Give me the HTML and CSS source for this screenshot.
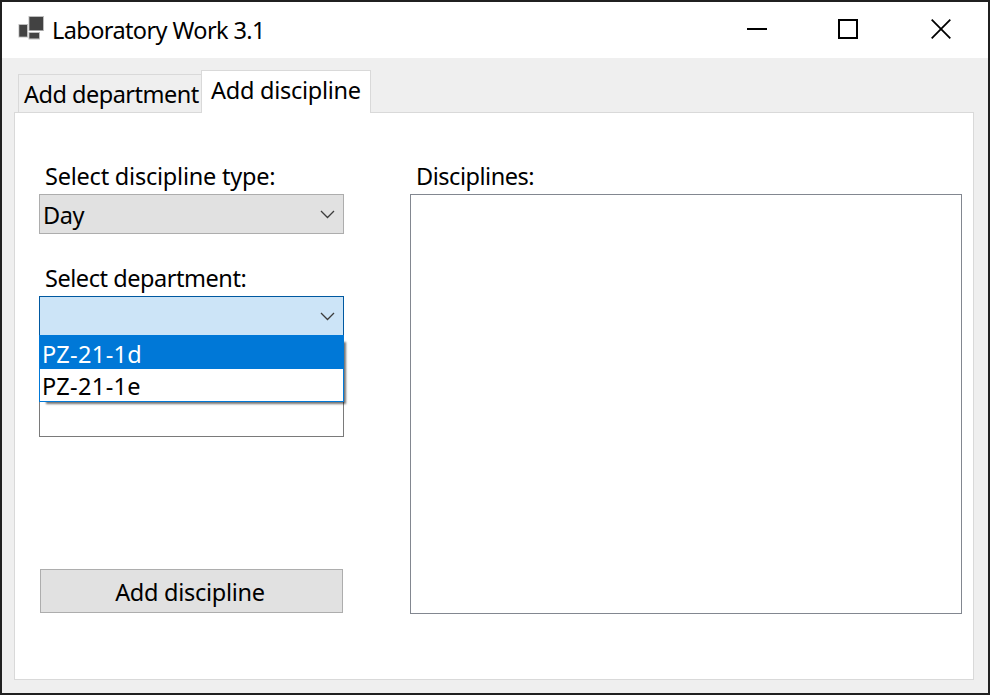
FILE: index.html
```html
<!DOCTYPE html>
<html lang="en">
<head>
<meta charset="utf-8">
<title>Laboratory Work 3.1</title>
<link rel="stylesheet" href="styles.css">
</head>
<body>
<div class="window">
  <header class="titlebar">
    <svg class="app-icon" width="28" height="26" viewBox="0 0 28 26">
      <g class="icon-halo"><rect x="0.5" y="9" width="9.5" height="13.5"/><rect x="10.5" y="1" width="15.5" height="15"/><rect x="10.5" y="17" width="11.5" height="7.5"/></g>
      <g class="icon-block"><rect x="1.3" y="10" width="7.7" height="11.6"/><rect x="11.4" y="2" width="13.6" height="13.2"/><rect x="11.4" y="18" width="9.6" height="5.4"/></g>
    </svg>
    <h1 class="title">Laboratory Work 3.1</h1>
    <div class="controls">
      <svg width="20" height="20" viewBox="0 0 20 20"><path d="M0 10H20"/></svg>
      <svg width="20" height="20" viewBox="0 0 20 20"><rect x="1" y="1" width="18" height="18"/></svg>
      <svg class="close" width="20" height="20" viewBox="0 0 20 20"><path class="cross" d="M.7 .7L19.3 19.3M19.3 .7L.7 19.3"/></svg>
    </div>
  </header>
  <main class="client">
    <nav class="tabs">
      <div class="tab"><span class="t-dep">Add department</span></div>
      <div class="tab active"><span class="t-dis">Add discipline</span></div>
    </nav>
    <section class="page">
      <form class="fields">
        <label class="label"><span class="t-type">Select discipline type:</span></label>
        <div class="combo"><span class="t-day">Day</span>
          <svg width="15" height="9" viewBox="0 0 15 9"><path d="M1 1L7.5 7.5L14 1"/></svg>
        </div>
        <label class="label second"><span class="t-sel">Select department:</span></label>
        <div class="combo open"><span></span>
          <svg width="15" height="9" viewBox="0 0 15 9"><path d="M1 1L7.5 7.5L14 1"/></svg>
          <div class="menu">
            <div class="item selected"><span class="t-pz">PZ-21-1d</span></div>
            <div class="item"><span class="t-pz">PZ-21-1e</span></div>
          </div>
        </div>
        <div class="textbox"></div>
        <div class="button"><span class="t-dis">Add discipline</span></div>
      </form>
      <div class="results">
        <label class="label"><span class="t-res">Disciplines:</span></label>
        <div class="listbox"></div>
      </div>
    </section>
  </main>
</div>
</body>
</html>
```
FILE: styles.css
```css
* { box-sizing: border-box; }
body { margin: 0; font: 23.5px/32px "Noto Sans", "Open Sans", sans-serif; color: #000; overflow: hidden; }
span, .title { white-space: nowrap; }
.window { width: 990px; height: 695px; border: 2px solid #202020; background: #efefef; display: flex; flex-direction: column; }
.titlebar { height: 56px; background: #fff; display: flex; align-items: flex-start; padding: 12px 37px 0 16px; }
.app-icon { flex: none; margin-top: 1px; }
.icon-halo { fill: #bdbdbd; }
.icon-block { fill: #424242; }
.title { margin: 0 0 0 6px; font-size: 23.5px; font-weight: 400; letter-spacing: -.6px; }
.controls { margin: 5px 0 0 auto; display: flex; gap: 71px; }
.controls svg { fill: none; stroke: #000; stroke-width: 2; }
.controls .close { margin-left: 2px; }
.controls .cross { stroke-width: 1.8; }
.client { flex: 1; padding: 12px 14px 13px 12px; display: flex; flex-direction: column; }
.tabs { display: flex; align-items: flex-end; padding-left: 4px; height: 42px; }
.tab { width: 183px; height: 38px; border: 1px solid #d9d9d9; border-width: 1px 0 0 1px; padding: 3px 0 0 5px; }
.tab.active { width: 170px; height: 43px; margin-bottom: -1px; border-right-width: 1px; background: #fff; padding: 3px 0 0 9px; position: relative; z-index: 1; }
.page { flex: 1; border: 1px solid #d9d9d9; background: #fff; padding: 47px 11px 65px 24px; display: flex; gap: 66px; }
.fields { width: 305px; display: flex; flex-direction: column; }
.label { display: block; height: 34px; padding-left: 6px; }
.label.second { margin-top: 28px; }
.combo { height: 40px; border: 1px solid #adadad; background: #e1e1e1; display: flex; align-items: center; justify-content: space-between; padding: 2px 8px 0 3px; position: relative; }
.combo > svg { margin-top: -2px; fill: none; stroke: #3c3c3c; stroke-width: 1.3; }
.combo.open { border-color: #0058a0; background: #cce4f7; z-index: 2; }
.menu { position: absolute; left: -1px; top: 38px; width: 305px; height: 67px; border: 1px solid #0078d7; background: #fff; }
.menu::after { content: ""; position: absolute; inset: 6px -1px -1px 6px; z-index: -1; box-shadow: 1px 1px 2px 1px rgba(0,0,0,.55); clip-path: polygon(100% -4px, 110% -4px, 110% 120%, -4px 120%, -4px 100%, 100% 100%); }
.item { height: 32px; padding-left: 2px; line-height: 35px; }
.item.selected { background: #0078d7; color: #fff; height: 33px; line-height: 36px; }
.textbox { margin-top: 61px; height: 40px; border: 1px solid #7a7a7a; background: #fff; }
.button { margin: 132px 1px 0; height: 44px; border: 1px solid #adadad; background: #e1e1e1; text-align: center; padding: 6px 3px 0 0; }
.results { flex: 1; display: flex; flex-direction: column; }
.listbox { flex: 1; border: 1px solid #828790; background: #fff; }
.t-dep { letter-spacing: -.5px; }
.t-dis { letter-spacing: -.27px; }
.t-type { letter-spacing: -.22px; }
.t-day { letter-spacing: -.4px; }
.t-sel { letter-spacing: -.45px; }
.t-pz { letter-spacing: .35px; }
.t-res { letter-spacing: -.46px; }
```
